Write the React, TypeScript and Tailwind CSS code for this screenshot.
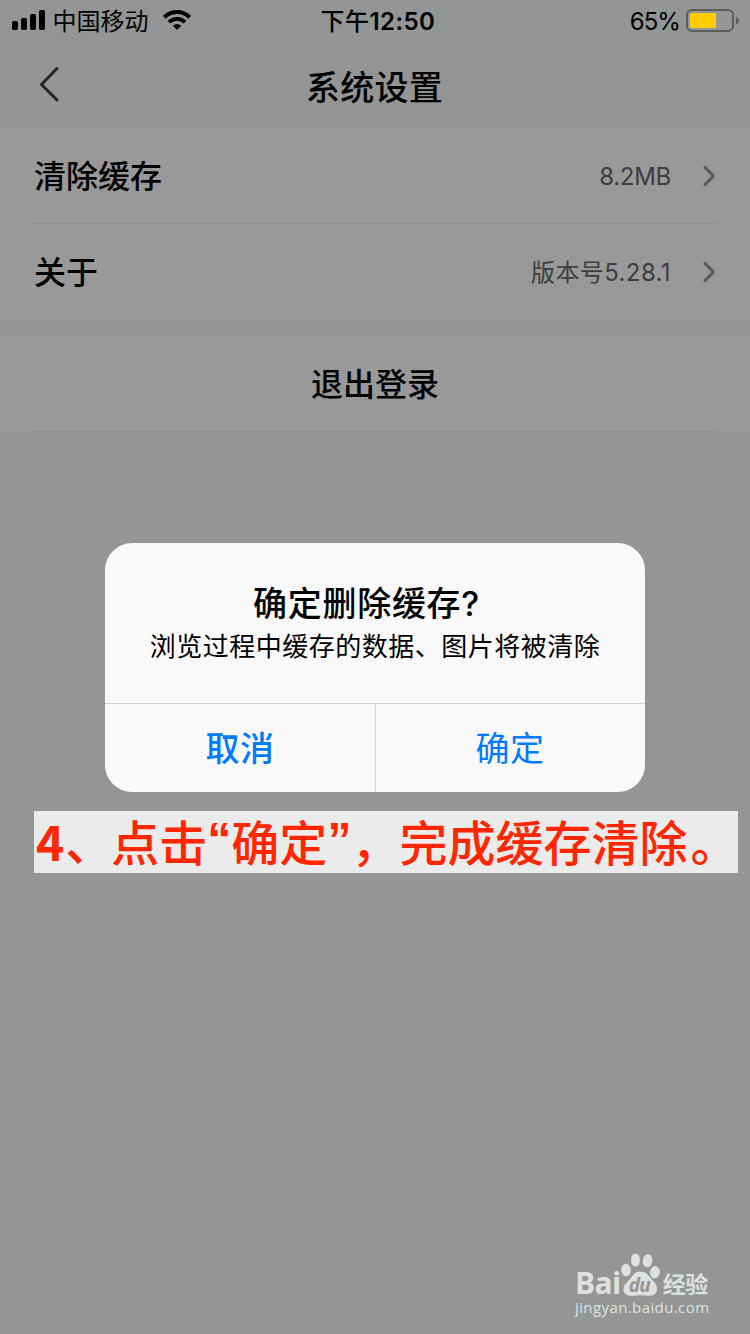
import type { ReactNode } from "react";
import { clsx } from "clsx";

interface SettingRowProps {
    label: string
    value: string
    valueClassName?: string
    divider?: boolean
}

function SignalIcon() {
    return (
        <svg width="34" height="20" viewBox="0 0 34 20" fill="#000">
            <rect x="0" y="11" width="6" height="9" rx="1.8" />
            <rect x="9" y="8" width="6" height="12" rx="1.8" />
            <rect x="18" y="4" width="6" height="16" rx="1.8" />
            <rect x="27" y="0" width="6" height="20" rx="1.8" />
        </svg>
    );
}

function WifiIcon() {
    return (
        <svg width="28" height="20" viewBox="0 0 28 20" fill="none" stroke="#000" strokeWidth="3.9">
            <path d="M1.3 7.3a18 18 0 0 1 25.4 0" />
            <path d="M5.9 12.2a11.5 11.5 0 0 1 16.2 0" />
            <path d="M14 20l-4.2-4.2a6 6 0 0 1 8.4 0z" fill="#000" stroke="none" />
        </svg>
    );
}

function BatteryIcon() {
    return (
        <svg className="mt-[2px]" width="54" height="24" viewBox="0 0 54 24">
            <rect x="1" y="1" width="46" height="21" rx="5" fill="none" stroke="#5b5d5c" strokeWidth="2" />
            <path d="M4 6a2 2 0 0 1 2-2h24v15H6a2 2 0 0 1-2-2z" fill="#ffcc00" />
            <path d="M50 7.5q3 1.5 3 4t-3 4z" fill="#5b5d5c" />
        </svg>
    );
}

function StatusBar() {
    return (
        <div className="grid h-10 grid-cols-3 items-center pr-[10px] pl-3">
            <div className="flex items-center">
                <SignalIcon />
                <span className="mt-[3px] ml-[6.5px] text-[24px] leading-9">中国移动</span>
                <span className="ml-[14.5px]"><WifiIcon /></span>
            </div>
            <div className="mt-[3px] pl-[4px] text-center text-[24px] leading-9 font-medium tracking-[0.45px]">
                下午<span className="font-semibold">12:50</span>
            </div>
            <div className="flex items-center justify-end">
                <span className="mt-[3px] mr-[6px] text-[24px] leading-9 tracking-[-0.9px]">65%</span>
                <BatteryIcon />
            </div>
        </div>
    );
}

function SettingRow({ label, value, valueClassName, divider }: SettingRowProps) {
    return (
        <div className="bg-[#999999] px-[34px]">
            <div className={clsx("flex h-24 items-center border-b", divider ? "border-[#8c8c8d]" : "border-transparent")}>
                <span className="mt-[3px] text-[32px] leading-[48px] font-medium">{label}</span>
                <span className={clsx("mt-[3px] ml-auto text-[24px] text-[#3d3d3d]", valueClassName)}>{value}</span>
                <svg className="ml-[31px]" width="14" height="22" viewBox="0 0 14 22" fill="none" stroke="#5c5c5c" strokeWidth="3.2" strokeLinecap="round" strokeLinejoin="round">
                    <path d="M3 2.5l7.2 7.1q1.3 1.4 0 2.8L3 19.5" />
                </svg>
            </div>
        </div>
    );
}

function DialogButton({ children, className }: { readonly children: ReactNode, readonly className?: string }) {
    return (
        <button className={clsx("pt-[1px] text-[34px] tracking-[0.5px] text-[#007aff]", className)}>
            {children}
        </button>
    );
}

function Dialog() {
    return (
        <div className="absolute top-[543px] left-[105px] flex h-[249px] w-[540px] flex-col overflow-hidden rounded-[27px] bg-[#f9f9f9]">
            <div className="h-[160px] pt-[37px] text-center">
                <h2 className="pr-[17px] text-[34px] leading-[48px] font-medium tracking-[0.7px]">确定删除缓存?</h2>
                <p className="text-[26px] leading-[38px] tracking-[0.5px] whitespace-nowrap">浏览过程中缓存的数据、图片将被清除</p>
            </div>
            <div className="flex flex-1 border-t border-[#d5d5d9]">
                <DialogButton className="w-[271px] border-r border-[#d5d5d9] font-medium">取消</DialogButton>
                <DialogButton className="flex-1 pr-[1px]">确定</DialogButton>
            </div>
        </div>
    );
}

function Caption() {
    return (
        <div className="absolute top-[811px] left-[34px] h-[62px] w-[704px] bg-[#ebebeb] pl-[2px]">
            <div className="flex font-['Noto_Sans_CJK_SC',sans-serif] text-[48px] leading-[58px] font-medium whitespace-nowrap text-[#ff2600]">
                <span className="w-[28px] font-bold tracking-[-1px]">4</span>
                <span className="ml-[2px] tracking-[-2px]">、</span>
                <span>点击</span>
                <span className="w-[24px] text-center font-['Liberation_Sans'] font-bold">“</span>
                <span>确定</span>
                <span className="w-[24px] text-center font-['Liberation_Sans'] font-bold">”</span>
                <span>，完成缓存清除</span>
                <span className="ml-[3px]">。</span>
            </div>
        </div>
    );
}

function Watermark() {
    return (
        <div className="absolute top-[1252px] left-[575px] text-[#dfe0e0]">
            <div className="flex h-[45px] items-end">
                <span className="pb-[3px] font-['Open_Sans'] text-[30px] leading-[22px] font-bold tracking-[-0.6px]">Bai</span>
                <div className="relative h-[45px] w-[40px] shrink-0">
                    <svg width="40" height="45" viewBox="0 0 40 45" fill="#dfe0e0">
                        <ellipse cx="5" cy="18" rx="4.7" ry="6.4" transform="rotate(-6 5 18)" />
                        <ellipse cx="14.5" cy="8" rx="4.5" ry="6.6" />
                        <ellipse cx="26.5" cy="8.8" rx="4.8" ry="6.5" transform="rotate(6 26.5 8.8)" />
                        <ellipse cx="34" cy="20.3" rx="4.9" ry="6.2" transform="rotate(8 34 20.3)" />
                        <path d="M19 19.500c6 0 8 3 11.500 7.500 3 3.500 5.500 5.500 5.500 10 0 4.500-3 6.800-8 6.800-3 0-6-.5-9-.5s-5 .5-8 .5c-5.500 0-8.500-2.300-8.500-6.800 0-4.500 3.500-6.500 6.500-10 3.500-4.500 5-7.500 10-7.500z" />
                    </svg>
                    <span className="absolute top-[22px] left-[8px] font-['Open_Sans'] text-[19px] leading-[22px] font-bold tracking-[-0.8px] text-[#939694] italic">du</span>
                </div>
                <span className="ml-[2px] text-[23px] leading-[23px] font-bold tracking-[-0.5px]">经验</span>
            </div>
            <p className="mt-[1px] font-['Open_Sans'] text-[15px] leading-[18px] tracking-[0.4px]">jingyan.baidu.com</p>
        </div>
    );
}

export default function App() {
    return (
        <main className="relative h-[1334px] w-[750px] overflow-hidden bg-[#939694] font-['Inter','Noto_Sans_CJK_SC',sans-serif] text-black">
            <StatusBar />
            <header className="flex h-[88px] items-center px-[39px]">
                <svg className="mt-[2px]" width="21" height="36" viewBox="0 0 21 36" fill="none" stroke="#242525" strokeWidth="3" strokeLinecap="round" strokeLinejoin="round">
                    <path d="M18 1.5L2.5 17.5 18 33" />
                </svg>
                <h1 className="mt-[6px] flex-1 pr-[22px] text-center text-[34px] font-medium tracking-[0.3px]">系统设置</h1>
            </header>

            <section className="mb-4">
                <SettingRow label="清除缓存" value="8.2MB" valueClassName="tracking-[-0.3px]" divider />
                <SettingRow label="关于" value="版本号5.28.1" valueClassName="tracking-[0.4px]" />
            </section>

            <section className="bg-[#999999] px-[34px]">
                <div className="flex h-24 items-center justify-center border-b border-[#8c8c8d] pt-[3px] text-[32px] font-medium">
                    退出登录
                </div>
            </section>

            <Dialog />
            <Caption />
            <Watermark />
        </main>
    );
}
